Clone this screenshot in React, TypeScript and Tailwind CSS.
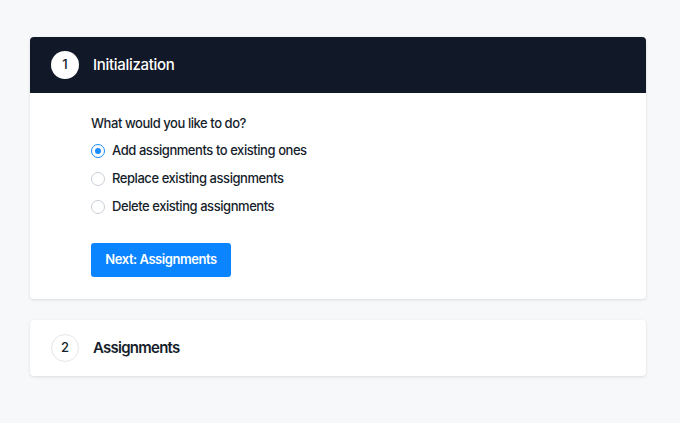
import React, { useState } from 'react';

const options = [
  'Add assignments to existing ones',
  'Replace existing assignments',
  'Delete existing assignments',
];

function Radio({ checked }: { checked: boolean }) {
  return (
    <span
      className={`flex h-[14px] w-[14px] shrink-0 items-center justify-center rounded-full border bg-white ${
        checked ? 'border-[#1a8cff]' : 'border-[#c9ced6]'
      }`}
    >
      {checked && <span className="h-[6px] w-[6px] rounded-full bg-[#1a8cff]" />}
    </span>
  );
}

export default function App() {
  const [choice, setChoice] = useState(0);

  return (
    <div className="min-h-[423px] bg-[#f7f8fa] pl-[30px] pr-[34px] pt-[37px] font-['Inter',sans-serif] text-[#161e2c]">
      {/* Step 1 */}
      <div className="overflow-hidden rounded-[4px] bg-white shadow-[0_1px_3px_rgba(17,24,39,0.12)]">
        <div className="flex h-[56px] items-center gap-[14px] bg-[#111827] pl-[21px]">
          <span className="flex h-[28px] w-[28px] items-center justify-center rounded-full bg-white text-[13px] font-medium text-[#111827]">
            1
          </span>
          <span className="text-[15px] font-medium tracking-[-0.02em] text-white">Initialization</span>
        </div>
        <div className="pb-[22px] pl-[61px] pt-[22px]">
          <p className="text-[13px] font-medium leading-[16px] tracking-[-0.034em]">What would you like to do?</p>
          <div className="mt-[6px] flex flex-col">
            {options.map((label, i) => (
              <label
                key={label}
                onClick={() => setChoice(i)}
                className="flex h-[28px] cursor-pointer items-center gap-[7px] text-[13px] font-medium tracking-[-0.034em]"
              >
                <Radio checked={choice === i} />
                {label}
              </label>
            ))}
          </div>
          <button className="mt-[22px] h-[34px] w-[140px] rounded-[3px] bg-[#0a84ff] text-[13px] font-semibold tracking-[-0.035em] text-white">
            Next: Assignments
          </button>
        </div>
      </div>

      {/* Step 2 */}
      <div className="mt-[21px] flex h-[56px] items-center gap-[14px] rounded-[4px] bg-white pl-[21px] shadow-[0_1px_3px_rgba(17,24,39,0.12)]">
        <span className="flex h-[28px] w-[28px] items-center justify-center rounded-full border border-[#e3e6eb] text-[13px] font-medium">
          2
        </span>
        <span className="text-[15px] font-semibold tracking-[-0.05em]">Assignments</span>
      </div>
    </div>
  );
}
